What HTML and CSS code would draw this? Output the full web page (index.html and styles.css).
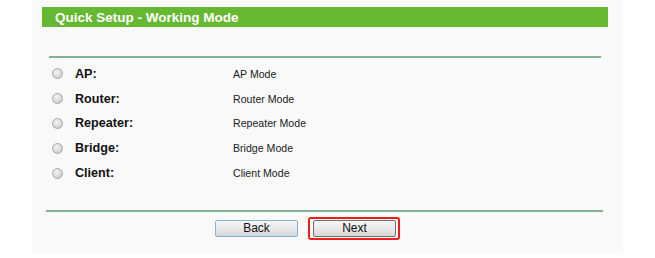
FILE: index.html
```html
<!DOCTYPE html>
<html>
<head>
<meta charset="utf-8">
<link rel="stylesheet" href="styles.css">
</head>
<body>
<div class="panel">
  <div class="header">Quick Setup - Working Mode</div>
  <div class="line top"></div>
  <div class="rows">
    <div class="row"><span class="radio"></span><span class="label">AP:</span><span class="mode">AP Mode</span></div>
    <div class="row"><span class="radio"></span><span class="label">Router:</span><span class="mode">Router Mode</span></div>
    <div class="row"><span class="radio"></span><span class="label">Repeater:</span><span class="mode">Repeater Mode</span></div>
    <div class="row"><span class="radio"></span><span class="label">Bridge:</span><span class="mode">Bridge Mode</span></div>
    <div class="row"><span class="radio"></span><span class="label">Client:</span><span class="mode">Client Mode</span></div>
  </div>
  <div class="line bottom"></div>
  <div class="buttons">
    <button class="btn back">Back</button>
    <span class="highlight"><button class="btn next">Next</button></span>
  </div>
</div>
</body>
</html>
```
FILE: styles.css
```css
html, body {
  margin: 0;
  padding: 0;
  background: #ffffff;
  font-family: "Liberation Sans", Arial, sans-serif;
}
.panel {
  margin-left: 32px;
  width: 591px;
  height: 253px;
  background: #f9f9f9;
  padding-top: 7px;
  box-sizing: border-box;
  overflow: hidden;
}
.header {
  margin-left: 10px;
  width: 566px;
  height: 20px;
  background: #66b833;
  color: #ffffff;
  font-weight: bold;
  font-size: 13.5px;
  line-height: 21px;
  padding-left: 13px;
  box-sizing: border-box;
}
.line {
  background: #80b293;
  height: 2px;
}
.line.top {
  margin-top: 29px;
  margin-left: 17px;
  width: 552px;
  height: 1.5px;
}
.rows {
  margin-top: 4px;
}
.row {
  display: flex;
  align-items: center;
  height: 24.8px;
}
.radio {
  width: 11px;
  height: 11px;
  border-radius: 50%;
  margin-left: 20px;
  border: 1px solid #a9a9a9;
  background: radial-gradient(circle at 40% 35%, #f4f4f4 0%, #dcdcdc 50%, #bdbdbd 100%);
  box-sizing: border-box;
}
.label {
  margin-left: 12px;
  width: 158px;
  font-weight: bold;
  font-size: 12.6px;
  color: #111;
}
.mode {
  font-size: 10.6px;
  color: #222;
}
.line.bottom {
  margin-top: 25px;
  margin-left: 14px;
  width: 557px;
}
.buttons {
  display: flex;
  align-items: center;
  margin-top: 5px;
  margin-left: 183px;
}
.btn {
  width: 83px;
  height: 17px;
  padding: 0;
  font-family: "Liberation Sans", Arial, sans-serif;
  font-size: 12px;
  color: #111;
  border-radius: 2px;
  background: linear-gradient(#f6f6f6 0%, #e9e9e9 50%, #d7d7d7 100%);
  line-height: 15px;
}
.btn.back {
  border: 1px solid #7fb3dc;
}
.highlight {
  margin-left: 10px;
  border: 2px solid #ee1c1c;
  border-radius: 3px;
  padding: 1px 2px 1px 3px;
  display: flex;
}
.btn.next {
  border: 1px solid #707070;
}
```
